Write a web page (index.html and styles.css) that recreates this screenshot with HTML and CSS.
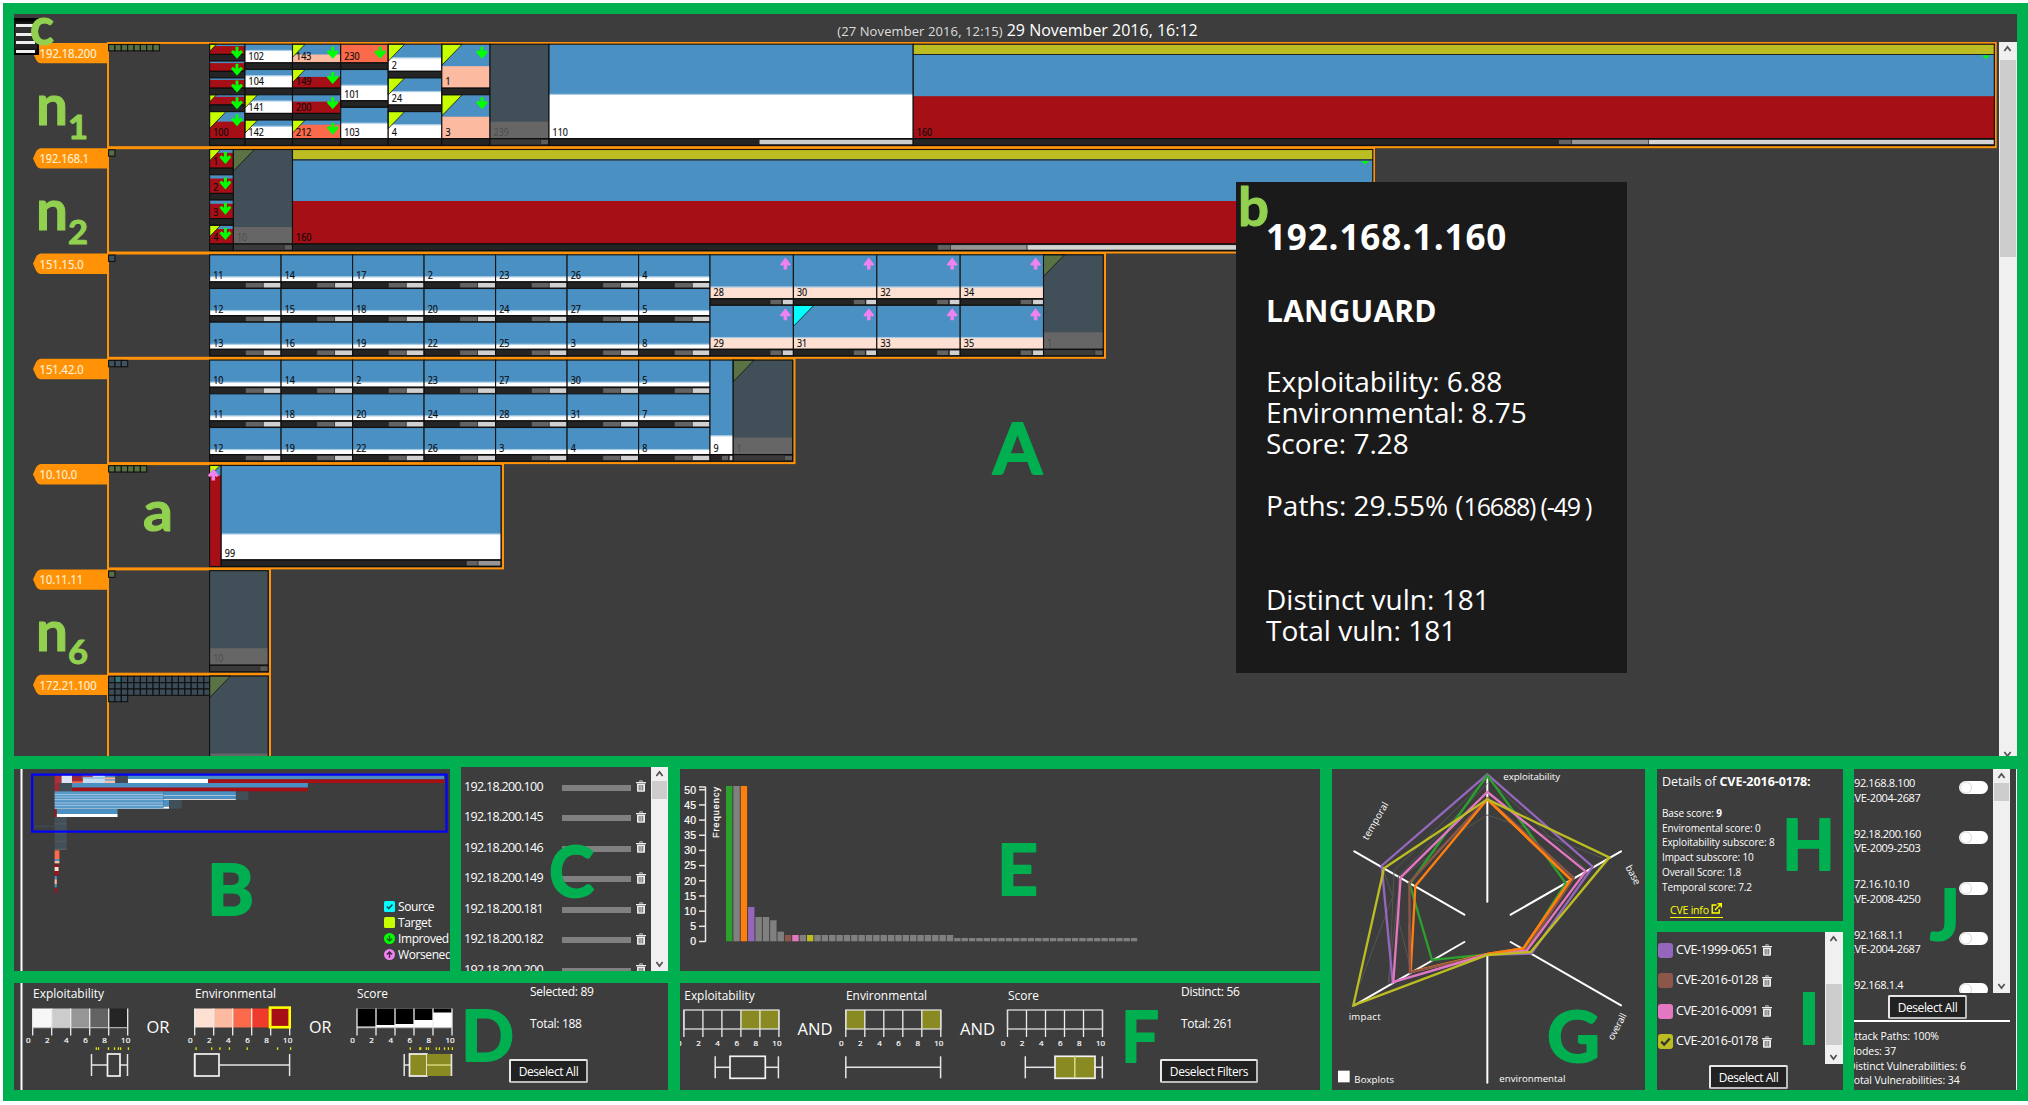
FILE: index.html
```html
<!DOCTYPE html>
<html lang="en">
<head>
<meta charset="utf-8">
<title>Attack graph monitor</title>
<link rel="stylesheet" href="styles.css">
</head>
<body>
<svg class="defs" aria-hidden="true">
  <symbol id="trash" viewBox="0 0 12 14"><path d="M0 2.2h12v1.5H0zM4 2V.4h4V2H6.9v-.7H5.1V2zM1.2 4.3h9.6V13q0 1-1 1H2.2q-1 0-1-1zM3.3 5.8v6.5h.9V5.8zm2.2 0v6.5h.9V5.8zm2.2 0v6.5h.9V5.8z" fill-rule="evenodd"/></symbol>
  <symbol id="up" viewBox="0 0 17 17"><path d="M4.7 11 8.5 6l3.8 5" fill="none" stroke="#505050" stroke-width="2"/></symbol>
  <symbol id="down" viewBox="0 0 17 17"><path d="M4.7 6l3.8 5 3.8-5" fill="none" stroke="#505050" stroke-width="2"/></symbol>
</svg>
<div class="frame">
  <section class="panel networks">
    <header class="titlebar"><span class="prev">(27 November 2016, 12:15)</span><span class="now">29 November 2016, 16:12</span></header>
    <div class="viewport">
      <svg id="map" class="map" viewBox="14 42 1985 714"></svg>
      <div class="scroll wide"><svg><use href="#up"/></svg><i class="thumb main-thumb"></i><svg class="end cut"><use href="#down"/></svg></div>
    </div>
    <div class="menu"><i></i><i></i><i></i><i></i></div>
    <aside class="tooltip">
      <h1>192.168.1.160</h1>
      <h2>LANGUARD</h2>
      <p>Exploitability: 6.88<br>Environmental: 8.75<br>Score: 7.28</p>
      <p class="paths">Paths: 29.55% (<small>16688) (-49 )</small></p>
      <p class="vuln">Distinct vuln: 181<br>Total vuln: 181</p>
    </aside>
  </section>

  <div class="lower">
    <div class="left">
      <div class="toprow">
        <section class="panel overview">
          <svg id="mini" class="mini" viewBox="14 769 436 202"></svg>
          <ul class="legend">
            <li><svg viewBox="0 0 11 11"><rect width="11" height="11" rx="1.5" fill="#0ff"/><path d="M2.8 5.5l2 2 3.6-4" fill="none" stroke="#234" stroke-width="1.4"/></svg>Source</li>
            <li><svg viewBox="0 0 11 11"><rect width="11" height="11" rx="1.5" fill="#c8ff00"/></svg>Target</li>
            <li><svg viewBox="0 0 11 11"><circle cx="5.5" cy="5.5" r="5.5" fill="#0f0"/><path d="M5.5 2.3v5.5M2.9 5.4l2.6 2.7 2.6-2.7" fill="none" stroke="#262" stroke-width="1.4"/></svg>Improved</li>
            <li><svg viewBox="0 0 11 11"><circle cx="5.5" cy="5.5" r="5.5" fill="#ee82ee"/><path d="M5.5 8.7V3.2M2.9 5.6l2.6-2.7 2.6 2.7" fill="none" stroke="#424" stroke-width="1.4"/></svg>Worsened</li>
          </ul>
        </section>
        <section class="panel hosts">
          <ul>
            <li><span>192.18.200.100</span><i></i><svg><use href="#trash"/></svg></li>
            <li><span>192.18.200.145</span><i></i><svg><use href="#trash"/></svg></li>
            <li><span>192.18.200.146</span><i></i><svg><use href="#trash"/></svg></li>
            <li><span>192.18.200.149</span><i></i><svg><use href="#trash"/></svg></li>
            <li><span>192.18.200.181</span><i></i><svg><use href="#trash"/></svg></li>
            <li><span>192.18.200.182</span><i></i><svg><use href="#trash"/></svg></li>
            <li><span>192.18.200.200</span><i></i><svg><use href="#trash"/></svg></li>
          </ul>
          <div class="scroll"><svg><use href="#up"/></svg><i class="thumb"></i><svg class="end"><use href="#down"/></svg></div>
        </section>
        <section class="panel histogram"><svg id="hist" viewBox="680 769 640 202"></svg></section>
      </div>
      <div class="bottomrow">
        <section class="panel filters-d">
          <svg id="nodeFilters" viewBox="14 983 447 107"></svg>
          <div class="summary"><span>Selected: 89</span><span>Total: 188</span><button>Deselect All</button></div>
        </section>
        <section class="panel filters-f">
          <svg id="vulnFilters" viewBox="680 983 447 107"></svg>
          <div class="summary"><span>Distinct: 56</span><span>Total: 261</span><button>Deselect Filters</button></div>
        </section>
      </div>
    </div>

    <section class="panel radar">
      <svg viewBox="36 57 939 963">
        <g stroke="#fff" stroke-width="6" stroke-linecap="round">
          <path d="M502 76V455M502 616V998M103 304L433 494M903 304L572 494M433 576L103 766M572 576L903 766"/>
        </g>
        <g fill="none" stroke="#555" stroke-width="3">
          <path d="M502 84L222 362L208 700L502 616"/><path d="M502 195L430 240L240 385L204 700"/><path d="M502 195L620 235L850 325"/><path d="M502 100L235 380L238 520L268 640"/><path d="M188 355L218 440L120 700"/><path d="M502 84L700 270L800 360"/>
        </g>
        <g fill="none" stroke-width="7" stroke-linejoin="miter">
          <path stroke="#9467bd" d="M502 73L818 350L634 611L502 614L218 697L185 347Z"/>
          <path stroke="#2ca02c" d="M502 76L737 399L612 597L502 613L336 630L269 402Z"/>
          <path stroke="#8c564b" d="M502 145L761 384L618 600L502 613L270 667L268 398Z"/>
          <path stroke="#ff7f0e" d="M502 148L752 388L610 595L502 612L272 666L286 408Z"/>
          <path stroke="#8c564b" d="M502 614L270 667L268 520"/>
          <path stroke="#e377c2" d="M502 126L797 364L620 602L502 613L220 696L242 382Z"/>
          <path stroke="#ff7f0e" d="M502 148L752 388L610 595L502 612"/>
          <path stroke="#bcbd22" d="M502 148L868 322L632 606L502 615L100 766L192 355Z"/>
        </g>
        <g class="axis-names">
          <text x="550" y="90" textLength="170">exploitability</text>
          <text x="86" y="810" textLength="96">impact</text>
          <text x="538" y="996" textLength="198">environmental</text>
          <text x="103" y="999" textLength="119">Boxplots</text>
          <text transform="translate(143 272) rotate(-60)" textLength="126">temporal</text>
          <text transform="translate(916 352) rotate(62)" textLength="62">base</text>
          <text transform="translate(880 872) rotate(-62)" textLength="86">overall</text>
        </g>
        <rect x="54" y="962" width="35" height="35" fill="#fff"/>
      </svg>
    </section>

    <div class="cves">
      <section class="panel details">
        <h3>Details of <b>CVE-2016-0178:</b></h3>
        <p>Base score: <b>9</b><br>Enviromental score: 0<br>Exploitability subscore: 8<br>Impact subscore: 10<br>Overall Score: 1.8<br>Temporal score: 7.2</p>
        <a>CVE info <svg viewBox="0 0 11 11"><path d="M5.5 2H1.2v8h7V6.2M4 7l5.7-5.7M6.5.8h3.8v3.8" fill="none" stroke="#ff0" stroke-width="1.4"/></svg></a>
      </section>
      <section class="panel picked">
        <div class="picked-list">
          <ul>
            <li><i class="sw purple"></i><span>CVE-1999-0651</span><svg><use href="#trash"/></svg></li>
            <li><i class="sw brown"></i><span>CVE-2016-0128</span><svg><use href="#trash"/></svg></li>
            <li><i class="sw pink"></i><span>CVE-2016-0091</span><svg><use href="#trash"/></svg></li>
            <li><i class="sw olive"><svg viewBox="0 0 15 15"><path d="M3.2 7.6l3 3 5.6-6" fill="none" stroke="#333" stroke-width="2.2"/></svg></i><span>CVE-2016-0178</span><svg><use href="#trash"/></svg></li>
          </ul>
          <div class="scroll wide"><svg><use href="#up"/></svg><i class="thumb low"></i><svg class="end"><use href="#down"/></svg></div>
        </div>
        <button>Deselect All</button>
      </section>
    </div>

    <section class="panel attacks">
      <div class="attacks-body">
        <div class="attack-list">
          <ul>
            <li><span>192.168.8.100<br>CVE-2004-2687</span><i class="toggle"></i></li>
            <li><span>192.18.200.160<br>CVE-2009-2503</span><i class="toggle"></i></li>
            <li><span>172.16.10.10<br>CVE-2008-4250</span><i class="toggle"></i></li>
            <li><span>192.168.1.1<br>CVE-2004-2687</span><i class="toggle"></i></li>
            <li><span>192.168.1.4</span><i class="toggle"></i></li>
          </ul>
          <div class="scroll"><svg><use href="#up"/></svg><i class="thumb"></i><svg class="end"><use href="#down"/></svg></div>
        </div>
        <button>Deselect All</button>
        <p>Attack Paths: 100%<br>Nodes: 37<br>Distinct Vulnerabilities: 6<br>Total Vulnerabilities: 34</p>
      </div>
    </section>
  </div>
</div>
<svg id="notes" class="notes" viewBox="0 0 2028 1105"></svg>
<script src="app.js"></script>
</body>
</html>
```
FILE: styles.css
```css
* { box-sizing: border-box; }
body { margin: 0; background: #fff; font-family: "Open Sans", "Noto Sans", sans-serif; color: #fff; width: 2028px; height: 1105px; overflow: hidden; }
svg { display: block; }
svg text { font-family: "Open Sans", "Noto Sans", sans-serif; fill: #fff; }
ul { list-style: none; margin: 0; padding: 0; }
.defs { position: absolute; width: 0; height: 0; }
.frame { margin: 3px 0 0 3px; width: 2025px; height: 1098px; padding: 11px 11px 10px; background: #00b050; display: flex; flex-direction: column; gap: 13px; }
.panel { background: #3d3d3d; overflow: hidden; }

.networks { position: relative; width: 2003px; height: 742px; }
.titlebar { height: 28px; display: flex; justify-content: center; align-items: baseline; gap: 4px; line-height: 33px; white-space: nowrap; padding-left: 4px; }
.titlebar .prev { font-size: 13px; letter-spacing: 0.1px; color: #ddd; }
.titlebar .now { font-size: 16px; }
.viewport { display: flex; height: 714px; }
.map { width: 1985px; height: 714px; }
.scroll { width: 17px; flex: none; background: #f0f0f0; display: flex; flex-direction: column; }
.scroll.wide { width: 18px; }
.scroll svg { width: 17px; height: 14px; flex: none; }
.scroll .thumb { display: block; height: 18px; background: #cdcdcd; margin: 0 1px; }
.scroll .main-thumb { height: 197px; margin-top: 4px; }
.scroll .end { margin-top: auto; }
.scroll .cut { margin-bottom: -5px; }
.menu { position: absolute; left: 0; top: 4px; width: 25px; height: 37px; background: linear-gradient(#000, #333 20%, #222 85%, #000); border: 2px solid #000; border-left: 1px solid #111; padding: 4px 1px 0; display: flex; flex-direction: column; gap: 5.5px; }
.menu i { height: 3px; width: 19px; background: #eee; }
.tooltip { position: absolute; left: 1222px; top: 168px; width: 391px; height: 491px; background: #1a1a1a; padding: 34px 0 0 30px; white-space: nowrap; }
.tooltip h1 { margin: 0; font-size: 35px; line-height: 42px; letter-spacing: 0.85px; }
.tooltip h2 { margin: 35px 0 0; font-size: 30px; line-height: 36px; letter-spacing: 0.2px; }
.tooltip p { margin: 37px 0 0; font-size: 28px; line-height: 31px; letter-spacing: 0; }
.tooltip small { font-size: 25px; letter-spacing: -1.2px; }
.tooltip .paths { margin-top: 31px; }
.tooltip .vuln { margin-top: 62px; }

.lower { display: flex; width: 2003px; height: 321px; }
.left { width: 1306px; display: flex; flex-direction: column; gap: 12px; }
.toprow { display: flex; height: 202px; }
.bottomrow { display: flex; height: 107px; gap: 12px; }
.overview { width: 436px; position: relative; }
.mini { width: 436px; height: 202px; }
.legend { position: absolute; left: 370px; top: 130px; font-size: 12px; font-weight: 500; letter-spacing: -0.4px; }
.legend li { height: 15.8px; display: flex; align-items: center; gap: 3px; }
.legend svg { width: 11px; height: 11px; }
.hosts { margin: -2px 0 0 11px; width: 207px; height: 204px; display: flex; justify-content: space-between; }
.hosts ul { padding: 4px 0 0 3px; }
.hosts li { height: 30.5px; display: flex; align-items: center; font-size: 12.5px; letter-spacing: -0.68px; }
.hosts li span { width: 98px; }
.hosts li i { width: 69px; height: 6px; margin: 3px 5px 0 0; background: #808080; }
.hosts li svg, .picked li > svg { width: 10px; height: 12px; fill: #eee; }
.histogram { margin-left: 12px; width: 640px; }
.histogram svg { width: 640px; height: 202px; }
.filters-d { width: 654px; display: flex; }
.filters-f { width: 640px; display: flex; }
.filters-d > svg, .filters-f > svg { width: 447px; height: 107px; flex: none; }
.summary { display: flex; flex-direction: column; align-items: flex-start; font-size: 12px; letter-spacing: -0.3px; padding-left: 69px; }
.filters-f .summary { padding-left: 54px; }
.summary span { height: 32px; line-height: 17px; }
button { font: 12px "Open Sans", sans-serif; letter-spacing: -0.4px; color: #fff; background: #222; border: 2px solid #e8e8e8; border-right-color: #bbb; border-bottom-color: #bbb; border-radius: 2px; height: 24px; width: 79px; padding: 0; white-space: nowrap; flex: none; }
.summary button { margin: 12px 0 0 -21px; }
.filters-f .summary button { width: 98px; }

.radar { margin-left: 12px; width: 313px; }
.radar svg { width: 313px; height: 321px; }
.radar .axis-names text { font-size: 29px; }
.cves { margin-left: 12px; width: 186px; display: flex; flex-direction: column; gap: 11px; }
.details { height: 152px; padding-left: 5px; white-space: nowrap; }
.details h3 { margin: 2px 0 0; font-weight: 400; font-size: 12.5px; line-height: 22px; letter-spacing: -0.05px; }
.details p { margin: 13px 0 0; font-size: 10px; line-height: 14.7px; letter-spacing: -0.1px; }
.details a { display: flex; gap: 2px; margin: 9px 0 0 8px; width: 53px; color: #ff0; font-size: 10.5px; line-height: 14px; border-bottom: 1px solid #ff0; letter-spacing: -0.2px; }
.details a svg { width: 11px; height: 11px; flex: none; }
.picked { height: 158px; }
.picked-list { height: 132px; display: flex; justify-content: space-between; }
.picked ul { padding: 3px 0 0 1px; }
.picked li { height: 30.5px; display: flex; align-items: center; font-size: 12.5px; letter-spacing: -0.42px; }
.picked li span { width: 86px; margin-top: -2px; }
.sw { width: 15px; height: 15px; border-radius: 3px; margin-right: 3px; }
.purple { background: #9467bd; }
.brown { background: #8c564b; }
.pink { background: #e377c2; }
.olive { background: #bcbd22; }
.scroll .low { height: 61px; margin-top: 38px; }
.picked button { margin: 1px 0 0 52px; display: block; }
.attacks { margin-left: 11px; width: 163px; border-right: 1px solid #fff; }
.attacks-body { margin-right: 6px; }
.attack-list { height: 224px; overflow: hidden; display: flex; justify-content: space-between; }
.attack-list ul { padding-top: 7px; }
.attack-list li { height: 50.6px; display: flex; font-size: 11px; line-height: 14.7px; letter-spacing: -0.35px; }
.attack-list li span { width: 111px; margin-left: -6px; }
.toggle { width: 29px; height: 13px; margin-top: 4.5px; border-radius: 7px; background: radial-gradient(circle at 7px 6.5px, #fff 4.5px, #ddd 5.5px, #fff 6.5px); }
.attacks button { display: block; margin: 2px 0 1px 34px; font-weight: 500; }
.attacks p { margin: 0 0 0 -6px; border-top: 2px solid #fff; padding-top: 7px; width: 162px; font-size: 10.5px; line-height: 14.8px; white-space: nowrap; letter-spacing: -0.1px; }
.notes { position: absolute; left: 0; top: 0; width: 2028px; height: 1105px; pointer-events: none; }
.notes text { font-family: Lato, sans-serif; font-weight: 700; fill: #00b050; stroke: #00b050; stroke-width: 2; stroke-linejoin: round; }
.notes text.light { fill: #92d050; stroke: #92d050; stroke-width: 1; }
```
FILE: app.js
```
const BLUE = '#4a90c2', RED = '#a50f15', SAL = '#fcbba1', ORG = '#fb6a4a', PALE = '#fee0d2', WHITE = '#fff';
const rect = (x, y, w, h, f, extra = '') => `<rect x="${x}" y="${y}" width="${w}" height="${h}" fill="${f}" ${extra}/>`;
const line = (x1, y1, x2, y2, s = '#e6e6e6', w = 1.5) => `<path d="M${x1} ${y1}L${x2} ${y2}" stroke="${s}" stroke-width="${w}" fill="none"/>`;
const text = (x, y, size, s, w, extra = '') =>
  `<text x="${x}" y="${y}" font-size="${size}" ${w ? `textLength="${w}" lengthAdjust="spacingAndGlyphs"` : ''} ${extra}>${s}</text>`;
const put = (id, s) => { document.getElementById(id).innerHTML = s; };

/* ---- network map ---- */
const down = (x, y) => `<path transform="translate(${x} ${y})" fill="#0f0" d="M-1.500-6h3v5l2.500-1.800L6-.8 0 6-6-.8l2-2L-1.500-1z"/>`;
const up = (x, y) => `<path transform="translate(${x} ${y})" fill="#ee82ee" d="M0-6L5.500 1 3.500 2.500 1.800 1.500V6h-3.600V1.500L-3.500 2.500-5.500 1z"/>`;

function cell(x0, x1, y0, y1, o) {
  const bar = o.bar === false ? 0 : 6.6, h = y1 - y0 - bar, w = x1 - x0, dim = o.dim;
  const b = h * o.blue;
  let s = rect(x0, y0, w, h, dim ? '#666' : o.color) + rect(x0, y0, w, b, dim ? '#414f59' : BLUE);
  if (o.color === WHITE || o.color === PALE) s += rect(x0, y0 + b - 0.5, w, 1.2, '#a8cbe5');
  if (o.cap) s += rect(x0, y0, w, 9.8, '#bcbd22') + line(x0, y0 + 10.3, x1, y0 + 10.3, '#222', 1.2);
  if (o.tri) { const t = o.ts || Math.min(20.5, h * 0.68);
    s += `<path d="M${x0} ${y0}h${t}l${-t} ${t * 1.03}z" fill="${o.tri}" stroke="#111" stroke-width=".8"/>`; }
  s += rect(x0, y0, w, h, 'none', 'stroke="#111" stroke-width="1.100"');
  if (bar) {
    s += rect(x0, y0 + h, w, bar, dim ? '#3a3a3a' : '#242424');
    for (const [f, t, c] of o.segs || []) s += rect(x0 + w * f, y0 + h + 0.8, w * (t - f), bar - 1.4, c, 'stroke="#222" stroke-width=".6"');
    s += rect(x0, y0 + h, w, bar, 'none', 'stroke="#0c0c0c" stroke-width="1.100"');
  }
  if (o.label) s += text(x0 + 3.6, y0 + h - 2.8, 10.3, o.label, o.label.length * 5.1, dim ? 'style="fill:#4c4c4c"' : 'style="fill:#0c0c0c;stroke:#0c0c0c;stroke-width:.2"');
  if (o.arrow === 'd') s += down(x1 - 8, y0 + 8.6);
  if (o.arrow === 'u') s += up(x1 - 8, y0 + 8.8);
  return s;
}
const T = '#c8ff00', OT = '#5a7344', top0 = i => 44.2 + 105.3 * i;
const H = 101.1;
let m = '';
const ends = [1995.7, 1374, 1105, 794.5, 503, 270, 270];
const names = ['192.18.200', '192.168.1', '151.15.0', '151.42.0', '10.10.0', '10.11.11', '172.21.100'];
ends.forEach((e, i) => {
  const y = 42.9 + 105.3 * i;
  m += rect(108, y, e - 108, 104.3, 'none', 'stroke="#ff9207" stroke-width="2"');
  m += `<path d="M109 ${y}H41q-3 0-5 3.500l-3 6.700 3 6.700q2 3.500 5 3.500h68z" fill="#ff9207"/>`;
  m += text(39.6, y + 15, 12.5, names[i], [57, 49.5, 44, 44, 37.5, 43.5, 57][i], 'style="fill:#fff1d8;stroke:#fff1d8;stroke-width:.2"');
});
const squares = (i, n, c, hi = -1) => { for (let k = 0; k < n; k++)
  m += rect(108.6 + (k % 16) * 6.35, top0(i) + 0.3 + Math.floor(k / 16) * 6.35, 6.35, 6.35, k === hi ? '#2f7480' : c, 'stroke="#111" stroke-width="1.100"'); };
squares(0, 8, '#586f43'); squares(1, 1, '#586f43'); squares(2, 1, '#41525e'); squares(3, 3, '#41525e');
squares(4, 6, '#586f43'); squares(5, 1, '#586f43'); squares(6, 51, '#3b4c58', 1);

/* each column: x0, x1, list of [share of the height, options] */
function column(row, x0, x1, cells) {
  let y = top0(row);
  for (const [share, o] of cells) { m += cell(x0, x1, y, y + H * share, o); y += H * share; }
}
const C = (label, color, blue, o = {}) => ({ label, color, blue, ...o });
column(0, 209.6, 245, [
  [1/6, C('', RED, .18, { tri: T, arrow: 'd' })], [1/6, C('', RED, .2, { arrow: 'd' })], [1/6, C('', RED, .2, { arrow: 'd' })],
  [1/6, C('', RED, .2, { tri: T, arrow: 'd' })], [1/3, C('100', RED, .37, { tri: T, ts: 16.5, arrow: 'd' })]]);
column(0, 245, 292.5, [[.25, C('102', WHITE, .33)], [.25, C('104', WHITE, .33)], [.25, C('141', WHITE, .33, { tri: T })], [.25, C('142', WHITE, .33, { tri: T })]]);
column(0, 292.5, 340.7, [[.25, C('143', SAL, .55, { tri: T, arrow: 'd' })], [.25, C('149', RED, .4, { tri: T, arrow: 'd' })],
  [.25, C('200', RED, .37, { arrow: 'd' })], [.25, C('212', ORG, .25, { tri: T, arrow: 'd' })]]);
column(0, 340.7, 388.2, [[.25, C('230', ORG, 0, { arrow: 'd' })], [.375, C('101', WHITE, .5)], [.375, C('103', WHITE, .5)]]);
column(0, 388.2, 441.8, [[1/3, C('2', WHITE, .5, { tri: T, ts: 16.5 })], [1/3, C('24', WHITE, .5, { tri: T, ts: 16.5 })], [1/3, C('4', WHITE, .48, { tri: T, ts: 16.5 })]]);
column(0, 441.8, 490, [[.5, C('1', SAL, .5, { tri: T, arrow: 'd' })], [.5, C('3', SAL, .5, { tri: T, arrow: 'd' })]]);
const dimOpt = (l, tri) => ({ dim: 1, label: l, blue: .82, tri: tri ? OT : 0, ts: 21, segs: [[.86, 1, '#5c5c5c']] });
column(0, 490, 549, [[1, dimOpt('239')]]);
column(0, 549, 913.2, [[1, C('110', WHITE, .53, { segs: [[.577, 1, '#ccc']] })]]);
const big = { cap: 1, segs: [[.597, .609, '#636363'], [.609, .68, '#969696'], [.68, 1, '#d4d4d4']] };
column(0, 913.2, 1994.3, [[1, C('160', RED, .55, big)]]);
m += '<path d="M1982 55.500h8l-4 3.500z" fill="#0f0"/>';
column(1, 209.6, 233.4, [[.25, C('1', RED, .18, { tri: T, ts: 11, arrow: 'd' })], [.25, C('2', RED, .2, { arrow: 'd' })],
  [.25, C('3', RED, .2, { arrow: 'd' })], [.25, C('4', RED, .2, { tri: T, ts: 11, arrow: 'd' })]]);
column(1, 233.4, 292.5, [[1, dimOpt('10', 1)]]);
column(1, 292.5, 1372.8, [[1, C('160', RED, .545, { cap: 1, segs: [[.597, .609, '#636363'], [.609, .68, '#969696'], [.68, 1, '#d4d4d4']] })]]);
m += '<path d="M1361 160.900h8l-4 3.500z" fill="#0f0"/>';
const grid = [[11,12,13],[14,15,16],[17,18,19],[2,20,22],[23,24,25],[26,27,3],[4,5,8]];
const grid2 = [[10,11,12],[14,18,19],[2,20,22],[23,24,26],[27,28,3],[30,31,4],[5,7,8]];
const q = [[.5, .75, '#636363'], [.75, 1, '#d0d0d0']];
[grid, grid2].forEach((g, r) => g.forEach((c, i) =>
  column(2 + r, 209.6 + 71.5 * i, 281.1 + 71.5 * i, c.map(n => [1/3, C(String(n), WHITE, .81, { segs: q })]))));
[[28,29],[30,31],[32,33],[34,35]].forEach((c, i) =>
  column(2, 710 + 83.4 * i, 793.4 + 83.4 * i, c.map(n => [.5, C(String(n), PALE, .73, { arrow: 'u', tri: n === 31 ? '#0ff' : 0, ts: 20.5, segs: [[.72, .86, '#636363'], [.87, 1, '#d0d0d0']] })])));
column(2, 1043.5, 1103.2, [[1, dimOpt('1', 1)]]);
column(3, 710, 733.2, [[1, C('9', WHITE, .8, { segs: [[.5, .8, '#636363'], [.83, 1, '#d0d0d0']] })]]);
column(3, 733.2, 792.6, [[1, dimOpt('1', 1)]]);
column(4, 209.6, 221.2, [[1, C('', RED, .1, { tri: T, ts: 10.5, bar: false })]]);
m += up(213.3, top0(4) + 9);
column(4, 221.2, 501, [[1, C('99', WHITE, .725, { segs: [[.876, .918, '#636363'], [.918, 1, '#969696']] })]]);
column(5, 209.6, 268.2, [[1, dimOpt('10')]]);
column(6, 209.6, 268.2, [[1, dimOpt('', 1)]]);
put('map', m);

/* ---- overview ---- */
const mx = v => v / 2.306, my = v => 750 + v / 3;
const mr = (a, b, c, d, f) => rect(mx(a), my(b), mx(c - a), (d - b) / 3, f);
let o = rect(20.5, 769, 2, 202, '#fff');
[[126,76,142,99,'#b0303a'],[142,76,166,99,'#dbe6f2'],[166,76,191,88,'#8a2a48'],[166,82,191,99,'#a02a34'],[166,94,191,99,ORG],[191,76,242,99,'#c4dcf0'],[191,76,214,82,'#a04a6a'],[191,82,242,86,'#8bb6da'],
[242,76,266,82,BLUE],[242,82,266,88,SAL],[242,88,266,93,'#8bb6da'],[242,93,266,99,SAL],[266,76,295,99,'#424c54'],
[295,76,1024,88,BLUE],[295,87,480,99,WHITE],[480,88,1024,99,RED],[480,76,1024,79,'#5b7cae'],
[126,99,137,124,'#a02a34'],[137,99,166,124,'#414f59'],[166,99,710,113,BLUE],[166,113,710,124,RED],
[126,124,377,176,'#5a9ac8'],[126,132,377,134,'#b8d4ea'],[126,140,377,142,'#b8d4ea'],[126,148,377,150,'#b8d4ea'],[126,158,377,160,'#b8d4ea'],[126,166,377,168,'#b8d4ea'],[126,174,377,176,'#b8d4ea'],
[377,124,544,150,BLUE],[377,135,544,137,'#d8dfe8'],[377,147,544,150,'#e8d8d4'],[544,124,573,150,'#414f59'],
[377,150,390,170,BLUE],[377,170,390,176,WHITE],[390,150,419,176,'#414f59'],
[126,178,131,201,RED],[131,177,271,192,BLUE],[131,192,271,201,WHITE],
[126,201,154,300,'#42505a'],[126,220,154,223,'#5c5c5c'],[126,247,154,250,'#5c5c5c'],[126,272,154,275,'#5c5c5c'],[126,296,154,300,'#5c5c5c'],[78,227,126,230,'#44505a'],
[126,301,137,327,ORG],[126,327,137,333,BLUE],[126,333,137,340,SAL],[126,344,136,351,RED],[126,351,135,363,PALE],[126,363,135,376,RED],
[126,378,131,388,BLUE],[126,388,131,403,SAL],[126,403,131,412,BLUE],[126,414,131,428,RED]].forEach(a => o += mr(...a));
o += rect(32.2, 774.6, 414.3, 57, 'none', 'stroke="#00f" stroke-width="2.200"');
put('mini', o);

/* ---- frequency histogram ---- */
let h = line(705.5, 786.7, 705.5, 941.7) + line(699, 787, 705.5, 787);
for (let v = 0; v <= 50; v += 5) {
  const y = 941.5 - v * 3.035;
  h += line(699, y, 705.5, y) + `<text x="696" y="${y + 3.8}" font-size="10.500" text-anchor="end" style="font-family:'Liberation Sans';stroke:#fff;stroke-width:.2">${v}</text>`;
}
h += `<text transform="translate(719 838) rotate(-90)" textLength="51" font-size="9" style="font-family:'Liberation Sans';stroke:#fff;stroke-width:.2">Frequency</text>`;
const tone = { 0: '#2ca02c', 2: '#ff7f0e', 3: '#9467bd', 8: '#8c564b', 9: '#e377c2', 11: '#bcbd22' };
const tops = [786, 786, 786, 907, 917, 917, 920.3, 931.7];
for (let i = 0; i < 56; i++) {
  const t = i < 8 ? tops[i] : i < 31 ? 935 : 938;
  h += rect(726 + i * 7.36, t, 6.4, 941.3 - t, tone[i] || '#808080');
}
put('hist', h);

/* ---- range filters ---- */
function scale(x, y, fills) {
  let s = '';
  fills.forEach((f, i) => { if (f) s += rect(x + 19 * i, y, 19, 19, f); });
  for (let i = 0; i < 6; i++) s += line(x + 19 * i, y, x + 19 * i, y + 27, '#eee', 1.3);
  return s;
}
const nums = (x, y) => [0, 2, 4, 6, 8, 10].map((v, i) => `<text x="${x - 4.5 + i * 19.1 + (v === 10 ? 2 : 0)}" y="${y}" font-size="8" text-anchor="middle" style="stroke:#fff;stroke-width:.2">${v}</text>`).join('');
function box(y, w0, b0, b1, w1, fill) {
  const mid = y + 11;
  return line(w0, y, w0, y + 22) + line(w1, y, w1, y + 22) + line(w0, mid, b0, mid) + line(b1, mid, w1, mid) +
    (b1 > b0 ? rect(b0, y, b1 - b0, 22, fill || 'none', 'stroke="#f2f2f2" stroke-width="1.700"') : '');
}
const dots = a => a.map(v => rect(mx(v) - 0.6, 1047.3, 1.3, 2.6, '#e6e600')).join('');
let d = rect(20.5, 983, 2, 107, '#fff');
d += text(33, 997.5, 12.5, 'Exploitability', 71) + text(195, 997.5, 12.5, 'Environmental', 81) + text(357, 997.5, 12.5, 'Score', 31);
d += scale(32.7, 1008.5, ['#f7f7f7', '#ccc', '#969696', '#636363', '#252525']) + scale(194.7, 1008.5, [PALE, SAL, ORG, '#ef3b2c', RED]);
d += rect(357, 1008.5, 95, 19, WHITE);
[18, 16.5, 15.5, 11.5, 4].forEach((k, i) => d += rect(357 + 19 * i, 1008.5, 19, k, '#000'));
d += scale(357, 1008.5, []);
d += rect(270, 1007.6, 19.7, 19.6, 'none', 'stroke="#ff0" stroke-width="2.600"');
d += line(32.7, 1027.7, 128, 1027.7, '#ccc', 1) + line(357, 1027.7, 452, 1027.7, '#ccc', 1);
d += nums(32.7, 1043) + nums(194.7, 1043) + nums(357, 1043);
d += dots([222, 227, 250, 264, 273, 278, 296, 452, 488, 507, 529, 570, 640, 670, 946, 968, 970, 983, 988, 1006, 1013, 1025, 1034, 1043]);
d += box(1054, 91.5, 107.5, 120, 127.5) + box(1054, 194.7, 194.7, 219, 289.6);
d += box(1054, 404.2, 409.5, 427, 451.4, '#8a8a22') + rect(427, 1054, 24.5, 22, '#8a8a22') + line(427, 1065, 451.4, 1065, '#d4d478') + line(451.4, 1054, 451.4, 1076);
d += text(146.5, 1033, 16, 'OR', 23) + text(309, 1033, 16, 'OR', 22.5);
put('nodeFilters', d);

const OL = '#8a8a22';
let f = text(684.3, 1000, 12.5, 'Exploitability', 70.5) + text(846, 1000, 12.5, 'Environmental', 81) + text(1008, 1000, 12.5, 'Score', 31);
[[683.9, [0, 0, 0, OL, OL]], [845.8, [OL, 0, 0, 0, OL]], [1007.5, []]].forEach(([x, c]) => {
  f += scale(x, 1010, c) + rect(x, 1010, 95, 19, 'none', 'stroke="#ddd" stroke-width="1.300"') + nums(x, 1045.5);
});
f += box(1056.3, 715.2, 730, 765.3, 778.4) + box(1056.3, 845.8, 893, 893, 940.6);
f += box(1056.3, 1025.3, 1055, 1095, 1102.3, OL) + line(1074.8, 1056, 1074.8, 1078, '#d8d88a');
f += text(797.5, 1035, 16, 'AND', 35) + text(960, 1035, 16, 'AND', 35);
put('vulnFilters', f);

/* ---- panel letters ---- */
const letter = (s, x, w, y) => text(x, y - 1, 71, s, w);
const small = (s, x, y, size, w) => text(x, y, size, s, w, 'class="light"');
put('notes', letter('A', 993, 49, 475) + letter('B', 207, 47, 915.7) + letter('C', 549, 45, 897.5) + letter('D', 461, 53, 1062.3) +
  letter('E', 997, 41, 895.5) + letter('F', 1121, 38, 1063) + letter('G', 1547, 53, 1063) + letter('H', 1782, 53, 871) +
  letter('I', 1798, 22, 1045) + letter('J', 1930, 30, 940.5) +
  small('c', 30, 45, 52, 24) + small('n', 36, 125, 56, 32) + small('1', 68, 138.500, 33, 20) +
  small('n', 36, 230, 56, 32) + small('2', 68, 244, 33, 20) + small('a', 143, 531, 56, 30) +
  small('n', 36, 651, 56, 32) + small('6', 68, 664, 33, 20) + small('b', 1238, 226, 54, 31));
```
